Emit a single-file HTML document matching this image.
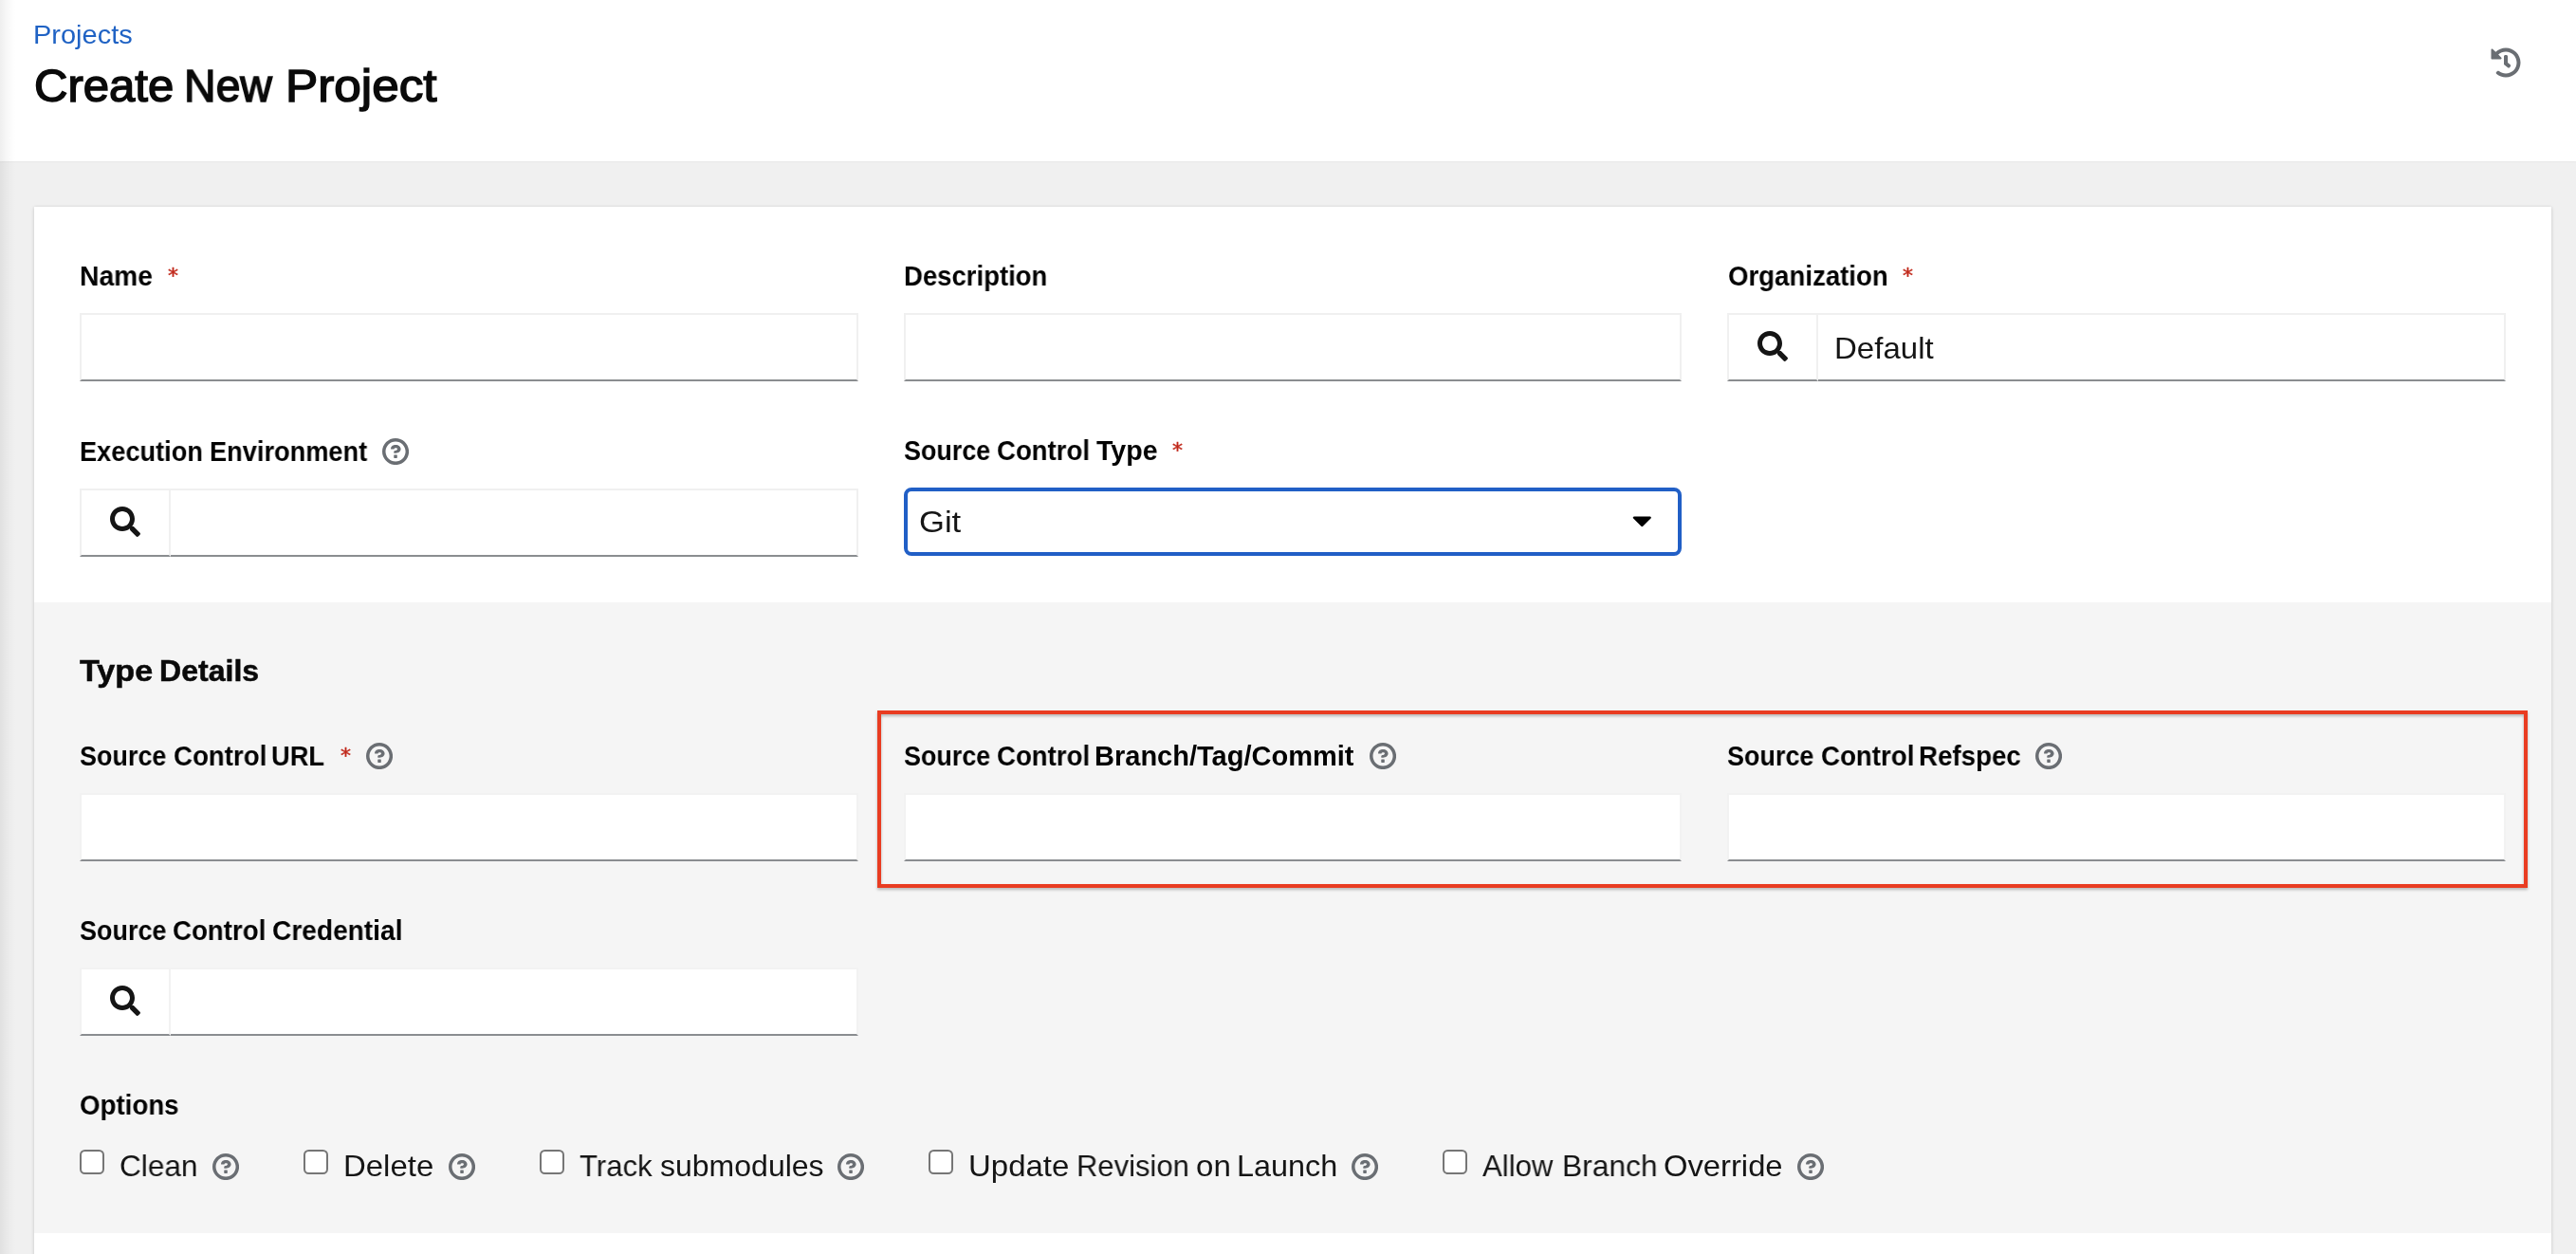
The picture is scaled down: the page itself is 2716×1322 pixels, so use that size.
<!DOCTYPE html>
<html lang="en"><head><meta charset="utf-8"><title>Create New Project</title>
<style>
*{box-sizing:border-box;margin:0;padding:0}
html,body{width:2716px;height:1322px;overflow:hidden}
body{position:relative;background:#f0f0f0;font-family:"Liberation Sans", sans-serif;color:#151515}
.hdr{position:absolute;left:0;top:0;width:2716px;height:170px;background:#fff;box-shadow:0 1px 2px rgba(3,3,3,.035)}
.card{position:absolute;left:36px;top:218px;width:2654px;height:1200px;background:#fff;box-shadow:0 1px 4px rgba(3,3,3,.14),0 0 3px rgba(3,3,3,.06)}
.sub{position:absolute;left:36px;top:635px;width:2654px;height:665px;background:#f5f5f5}
.lsh{position:absolute;left:0;top:0;width:17px;height:1322px;background:linear-gradient(to right,rgba(3,3,3,.065),rgba(3,3,3,.03) 40%,rgba(3,3,3,.008) 80%,rgba(3,3,3,0));z-index:10}
a{text-decoration:none}
h1,h4,label{font:inherit}
.t{position:absolute;white-space:nowrap;will-change:transform;transform-origin:0 0}
.ic{position:absolute;overflow:visible}
.inp{position:absolute;background:#fff;border:2px solid #f0f0f0;border-bottom:2px solid #8a8d90}
.inp.g{border-color:#f2f2f2;border-bottom-color:#8a8d90}
.sel{position:absolute;background:#fff;border:4px solid #215fc6;border-radius:8px}
.cb{position:absolute;width:26px;height:26px;background:#fff;border:2px solid #767676;border-radius:5.5px}
.star{position:absolute;will-change:transform;font-family:"DejaVu Sans",sans-serif;font-size:22px;line-height:22px;color:#c0281a;font-weight:400;-webkit-text-stroke:0.45px #c0281a}
.red{position:absolute;left:925px;top:749px;width:1740px;height:187px;border:4px solid #e93c21;filter:drop-shadow(0 2px 1.5px rgba(0,0,0,.26))}
#t_projects_0{left:35.24px;top:23.30px;transform:scaleX(1.0348)}
#t_projects span{font-size:28px;line-height:28px;font-weight:400;color:#1f62c4;}
#t_title_0{left:36.10px;top:67.37px;transform:scaleX(1.0223)}
#t_title span{font-size:48px;line-height:48px;font-weight:400;color:#0a0a0a;-webkit-text-stroke:1.5px #0a0a0a;}
#t_title_1{left:194.07px;top:67.37px;transform:scaleX(0.9681)}
#t_title_2{left:300.80px;top:67.37px;transform:scaleX(1.0679)}
#l_name_0{left:83.83px;top:276.69px;transform:scaleX(0.9881)}
#l_name span{font-size:28.6px;line-height:28.6px;font-weight:700;color:#030303;}
#l_desc_0{left:952.98px;top:276.69px;transform:scaleX(0.9620)}
#l_desc span{font-size:28.6px;line-height:28.6px;font-weight:700;color:#030303;}
#l_org_0{left:1821.54px;top:276.69px;transform:scaleX(0.9658)}
#l_org span{font-size:28.6px;line-height:28.6px;font-weight:700;color:#030303;}
#l_ee_0{left:84.20px;top:461.59px;transform:scaleX(0.9505)}
#l_ee span{font-size:28.6px;line-height:28.6px;font-weight:700;color:#030303;}
#l_ee_1{left:221.00px;top:461.59px;transform:scaleX(0.9510)}
#l_sct_0{left:952.88px;top:461.19px;transform:scaleX(0.9405)}
#l_sct span{font-size:28.6px;line-height:28.6px;font-weight:700;color:#030303;}
#l_sct_1{left:1051.44px;top:461.19px;transform:scaleX(0.9639)}
#l_sct_2{left:1156.10px;top:461.19px;transform:scaleX(0.9982)}
#l_td_0{left:84.30px;top:691.72px;transform:scaleX(1.0887)}
#l_td span{font-size:31.4px;line-height:31.4px;font-weight:700;color:#0a0a0a;-webkit-text-stroke:0.5px #0a0a0a;}
#l_td_1{left:168.09px;top:691.72px;transform:scaleX(1.0217)}
#l_url_0{left:84.08px;top:782.69px;transform:scaleX(0.9426)}
#l_url span{font-size:28.6px;line-height:28.6px;font-weight:700;color:#030303;}
#l_url_1{left:182.54px;top:782.69px;transform:scaleX(0.9669)}
#l_url_2{left:286.22px;top:782.69px;transform:scaleX(0.9535)}
#l_branch_0{left:952.88px;top:782.69px;transform:scaleX(0.9405)}
#l_branch span{font-size:28.6px;line-height:28.6px;font-weight:700;color:#030303;}
#l_branch_1{left:1051.34px;top:782.69px;transform:scaleX(0.9649)}
#l_branch_2{left:1154.49px;top:782.69px;transform:scaleX(1.0147)}
#l_refspec_0{left:1821.18px;top:782.69px;transform:scaleX(0.9426)}
#l_refspec span{font-size:28.6px;line-height:28.6px;font-weight:700;color:#030303;}
#l_refspec_1{left:1919.63px;top:782.69px;transform:scaleX(0.9679)}
#l_refspec_2{left:2022.87px;top:782.69px;transform:scaleX(0.9690)}
#l_cred_0{left:83.98px;top:966.69px;transform:scaleX(0.9436)}
#l_cred span{font-size:28.6px;line-height:28.6px;font-weight:700;color:#030303;}
#l_cred_1{left:182.44px;top:966.69px;transform:scaleX(0.9669)}
#l_cred_2{left:286.72px;top:966.69px;transform:scaleX(0.9827)}
#l_opts_0{left:84.13px;top:1150.79px;transform:scaleX(0.9681)}
#l_opts span{font-size:28.6px;line-height:28.6px;font-weight:700;color:#030303;}
#v_default_0{left:1933.92px;top:350.71px;transform:scaleX(1.0323)}
#v_default span{font-size:32px;line-height:32px;font-weight:400;color:#151515;}
#v_git_0{left:968.68px;top:533.91px;transform:scaleX(1.0810)}
#v_git span{font-size:32px;line-height:32px;font-weight:400;color:#151515;}
#c_clean_0{left:125.82px;top:1212.61px;transform:scaleX(0.9874)}
#c_clean span{font-size:32px;line-height:32px;font-weight:400;color:#151515;}
#c_delete_0{left:362.03px;top:1212.61px;transform:scaleX(1.0293)}
#c_delete span{font-size:32px;line-height:32px;font-weight:400;color:#151515;}
#c_track_0{left:610.51px;top:1212.61px;transform:scaleX(0.9732)}
#c_track span{font-size:32px;line-height:32px;font-weight:400;color:#151515;}
#c_track_1{left:695.80px;top:1212.61px;transform:scaleX(1.0003)}
#c_update_0{left:1021.24px;top:1212.61px;transform:scaleX(1.0301)}
#c_update span{font-size:32px;line-height:32px;font-weight:400;color:#151515;}
#c_update_1{left:1134.88px;top:1212.61px;transform:scaleX(0.9677)}
#c_update_2{left:1260.77px;top:1212.61px;transform:scaleX(1.0336)}
#c_update_3{left:1303.87px;top:1212.61px;transform:scaleX(1.0120)}
#c_allow_0{left:1563.30px;top:1212.61px;transform:scaleX(0.9745)}
#c_allow span{font-size:32px;line-height:32px;font-weight:400;color:#151515;}
#c_allow_1{left:1646.52px;top:1212.61px;transform:scaleX(0.9929)}
#c_allow_2{left:1754.37px;top:1212.61px;transform:scaleX(1.0233)}
</style></head>
<body>
<svg width="0" height="0" style="position:absolute"><defs>
<symbol id="i-history" viewBox="0 0 512 512"><path d="M504 255.531c.253 136.64-111.18 248.372-247.82 248.468-59.015.042-113.223-20.53-155.822-54.911-11.077-8.94-11.905-25.541-1.839-35.607l11.267-11.267c8.609-8.609 22.353-9.551 31.891-1.984C173.062 425.135 212.781 440 256 440c101.705 0 184-82.311 184-184 0-101.705-82.311-184-184-184-48.814 0-93.149 18.969-126.068 49.932l50.754 50.754c10.08 10.08 2.941 27.314-11.313 27.314H24c-8.837 0-16-7.163-16-16V38.627c0-14.254 17.234-21.393 27.314-11.314l49.372 49.372C129.209 34.136 189.552 8 256 8c136.81 0 247.747 110.78 248 247.531zm-180.912 78.784l9.823-12.63c8.138-10.463 6.253-25.542-4.21-33.679L288 256.349V152c0-13.255-10.745-24-24-24h-16c-13.255 0-24 10.745-24 24v135.651l65.409 50.874c10.463 8.137 25.541 6.253 33.679-4.21z"/></symbol>
<symbol id="i-search" viewBox="0 0 512 512"><path d="M505 442.7L405.3 343c-4.5-4.5-10.6-7-17-7H372c27.6-35.3 44-79.7 44-128C416 93.1 322.9 0 208 0S0 93.1 0 208s93.1 208 208 208c48.3 0 92.7-16.4 128-44v16.3c0 6.400 2.5 12.5 7 17l99.7 99.7c9.4 9.4 24.6 9.4 33.9 0l28.3-28.3c9.4-9.4 9.4-24.6.1-34zM208 336c-70.7 0-128-57.2-128-128 0-70.7 57.2-128 128-128 70.7 0 128 57.2 128 128 0 70.7-57.2 128-128 128z"/></symbol>
<symbol id="i-help" viewBox="0 0 1024 1024"><path d="M521.3,576 C627.5,576 713.7,502 713.7,413.7 C713.7,325.4 627.6,253.6 521.3,253.6 C366,253.6 334.5,337.7 329.2,407.2 C329.2,414.3 335.2,416 343.5,416 L445,416 C450.5,416 458,415.5 460.8,406.5 C460.8,362.6 582.9,357.1 582.9,413.6 C582.9,441.9 556.2,470.9 521.3,473 C486.4,475.1 447.3,479.8 447.3,521.7 L447.3,553.8 C447.3,570.8 456.1,576 472,576 C487.9,576 521.3,576 521.3,576 M575.3,751.3 L575.3,655.3 C575.3,645.3 568.3,638 559.3,638 L463.3,638 C454.3,638 447.3,645 447.3,655.3 L447.3,751.3 C447.3,760.3 454.3,768 463.3,768 L559.3,768 C568.3,768 575.3,760.3 575.3,751.3 M512,896 C300.2,896 128,723.9 128,512 C128,300.3 300.2,128 512,128 C723.7,128 896,300.3 896,512 C896,723.9 723.7,896 512,896 M512.1,0 C229.7,0 0,229.8 0,512 C0,794.3 229.8,1024 512.1,1024 C794.4,1024 1024,794.3 1024,512 C1024,229.7 794.4,0 512.1,0"/></symbol>
<symbol id="i-caret" viewBox="0 0 320 512"><path d="M31.3 192h257.300c17.800 0 26.700 21.500 14.100 34.100L174.100 354.800c-7.800 7.800-20.500 7.800-28.300 0L17.200 226.100C4.600 213.500 13.500 192 31.300 192z"/></symbol>
</defs></svg>
<div class="hdr"></div>
<div class="card"></div>
<div class="sub"></div>
<div class="inp" style="left:84px;top:330px;width:821px;height:72px"></div>
<div class="inp" style="left:953px;top:330px;width:820px;height:72px"></div>
<div class="inp" style="left:1915px;top:330px;width:727px;height:72px"></div>
<div class="inp btn" style="left:1821px;top:330px;width:96px;height:72px"></div>
<div class="inp" style="left:178px;top:515px;width:727px;height:72px"></div>
<div class="inp btn" style="left:84px;top:515px;width:96px;height:72px"></div>
<div class="sel" style="left:953px;top:514px;width:820px;height:72px"></div>
<div class="inp g" style="left:84px;top:836px;width:821px;height:72px"></div>
<div class="inp g" style="left:953px;top:836px;width:820px;height:72px"></div>
<div class="inp g" style="left:1821px;top:836px;width:821px;height:72px"></div>
<div class="inp g" style="left:178px;top:1020px;width:727px;height:72px"></div>
<div class="inp g btn" style="left:84px;top:1020px;width:96px;height:72px"></div>
<div class="cb" style="left:84px;top:1212px"></div>
<div class="cb" style="left:320px;top:1212px"></div>
<div class="cb" style="left:568.7px;top:1212px"></div>
<div class="cb" style="left:979px;top:1212px"></div>
<div class="cb" style="left:1521px;top:1212px"></div>
<a id="t_projects" href="#"><span class="t" id="t_projects_0">Projects</span></a>
<h1 id="t_title"><span class="t" id="t_title_0">Create</span> <span class="t" id="t_title_1">New</span> <span class="t" id="t_title_2">Project</span></h1>
<label id="l_name"><span class="t" id="l_name_0">Name</span></label>
<label id="l_desc"><span class="t" id="l_desc_0">Description</span></label>
<label id="l_org"><span class="t" id="l_org_0">Organization</span></label>
<label id="l_ee"><span class="t" id="l_ee_0">Execution</span> <span class="t" id="l_ee_1">Environment</span></label>
<label id="l_sct"><span class="t" id="l_sct_0">Source</span> <span class="t" id="l_sct_1">Control</span> <span class="t" id="l_sct_2">Type</span></label>
<h4 id="l_td"><span class="t" id="l_td_0">Type</span> <span class="t" id="l_td_1">Details</span></h4>
<label id="l_url"><span class="t" id="l_url_0">Source</span> <span class="t" id="l_url_1">Control</span> <span class="t" id="l_url_2">URL</span></label>
<label id="l_branch"><span class="t" id="l_branch_0">Source</span> <span class="t" id="l_branch_1">Control</span> <span class="t" id="l_branch_2">Branch/Tag/Commit</span></label>
<label id="l_refspec"><span class="t" id="l_refspec_0">Source</span> <span class="t" id="l_refspec_1">Control</span> <span class="t" id="l_refspec_2">Refspec</span></label>
<label id="l_cred"><span class="t" id="l_cred_0">Source</span> <span class="t" id="l_cred_1">Control</span> <span class="t" id="l_cred_2">Credential</span></label>
<label id="l_opts"><span class="t" id="l_opts_0">Options</span></label>
<div id="v_default"><span class="t" id="v_default_0">Default</span></div>
<div id="v_git"><span class="t" id="v_git_0">Git</span></div>
<label id="c_clean"><span class="t" id="c_clean_0">Clean</span></label>
<label id="c_delete"><span class="t" id="c_delete_0">Delete</span></label>
<label id="c_track"><span class="t" id="c_track_0">Track</span> <span class="t" id="c_track_1">submodules</span></label>
<label id="c_update"><span class="t" id="c_update_0">Update</span> <span class="t" id="c_update_1">Revision</span> <span class="t" id="c_update_2">on</span> <span class="t" id="c_update_3">Launch</span></label>
<label id="c_allow"><span class="t" id="c_allow_0">Allow</span> <span class="t" id="c_allow_1">Branch</span> <span class="t" id="c_allow_2">Override</span></label>
<div class="star" style="left:176.66px;top:280.09px">*</div>
<div class="star" style="left:2006.16px;top:280.09px">*</div>
<div class="star" style="left:1236.36px;top:464.09px">*</div>
<div class="star" style="left:358.76px;top:786.09px">*</div>
<svg class="ic" style="left:2625.8px;top:49.9px;width:32px;height:32px;fill:#6a6e73"><use href="#i-history"/></svg>
<svg class="ic" style="left:1853px;top:348.8px;width:32px;height:32px;fill:#151515"><use href="#i-search"/></svg>
<svg class="ic" style="left:116px;top:533.9px;width:32px;height:32px;fill:#151515"><use href="#i-search"/></svg>
<svg class="ic" style="left:116px;top:1038.9px;width:32px;height:32px;fill:#151515"><use href="#i-search"/></svg>
<svg class="ic" style="left:403.2px;top:462.0px;width:28.1px;height:28.1px;fill:#6a6e73"><use href="#i-help"/></svg>
<svg class="ic" style="left:386.0px;top:783.0px;width:28.1px;height:28.1px;fill:#6a6e73"><use href="#i-help"/></svg>
<svg class="ic" style="left:1444.0px;top:783.0px;width:28.1px;height:28.1px;fill:#6a6e73"><use href="#i-help"/></svg>
<svg class="ic" style="left:2145.9px;top:783.0px;width:28.1px;height:28.1px;fill:#6a6e73"><use href="#i-help"/></svg>
<svg class="ic" style="left:224.1px;top:1216.0px;width:28.1px;height:28.1px;fill:#6a6e73"><use href="#i-help"/></svg>
<svg class="ic" style="left:473.1px;top:1216.0px;width:28.1px;height:28.1px;fill:#6a6e73"><use href="#i-help"/></svg>
<svg class="ic" style="left:883.1px;top:1216.0px;width:28.1px;height:28.1px;fill:#6a6e73"><use href="#i-help"/></svg>
<svg class="ic" style="left:1425.2px;top:1216.0px;width:28.1px;height:28.1px;fill:#6a6e73"><use href="#i-help"/></svg>
<svg class="ic" style="left:1895.0px;top:1216.0px;width:28.1px;height:28.1px;fill:#6a6e73"><use href="#i-help"/></svg>
<svg class="ic" style="left:1720.63px;top:532.42px;width:20.625px;height:33px;fill:#000"><use href="#i-caret"/></svg>
<div class="red"></div>
<div class="lsh"></div>
</body></html>
